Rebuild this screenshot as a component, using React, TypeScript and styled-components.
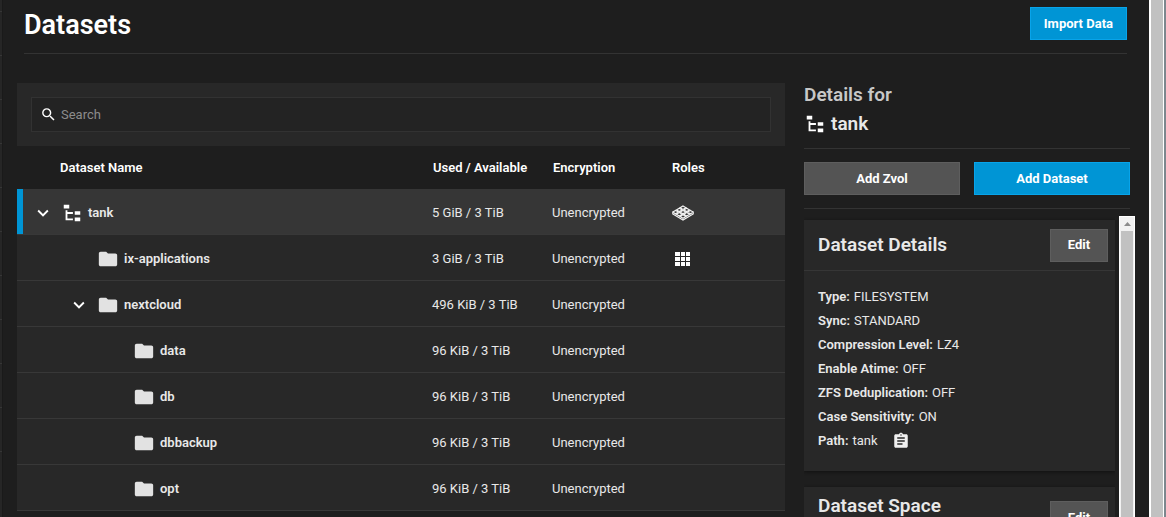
import React from "react";
import styled, { createGlobalStyle } from "styled-components";
import { MdAssignment, MdExpandMore, MdFolder, MdSearch } from "react-icons/md";

const GlobalStyle = createGlobalStyle`
  *, *::before, *::after { box-sizing: border-box; }
  body {
    margin: 0;
    background: #1e1e1e;
    color: #e8e8e8;
    font-family: Roboto, "Liberation Sans", sans-serif;
    font-size: 13px;
    line-height: 20px;
  }
  h1, h2, h3, dl, dd { margin: 0; }
`;

const Shell = styled.div`
  display: flex;
  height: 100vh;
  overflow: hidden;
`;

const NavEdge = styled.div`
  flex: 0 0 3px;
  background: repeating-linear-gradient(#262626 0 43px, #363636 43px 44px) 0 -32px;
  border-right: 1px solid #1a1a1a;
`;

const Page = styled.main`
  flex: 1;
  min-width: 0;
  display: flex;
  flex-direction: column;
  padding: 0 14px;
`;

const PageHeader = styled.header`
  display: flex;
  align-items: center;
  justify-content: space-between;
  height: 54px;
  margin: 0 8px 0 7px;
  padding-bottom: 6px;
  border-bottom: 1px solid #333;
`;

const PageTitle = styled.h1`
  padding-top: 2px;
  font-size: 27px;
  line-height: 32px;
  font-weight: 600;
  color: #fff;
`;

const Button = styled.button<{ $primary?: boolean }>`
  height: 33px;
  min-width: 58px;
  padding: 0 13px;
  border: 1px solid ${(p) => (p.$primary ? "#08a4ea" : "#5e5e5e")};
  background: ${(p) => (p.$primary ? "#0095d5" : "#545454")};
  color: #fff;
  font: 700 13px/20px Roboto, "Liberation Sans", sans-serif;
`;

const Columns = styled.div`
  flex: 1;
  min-height: 0;
  display: flex;
  gap: 19px;
  padding-top: 29px;
`;

const TreePanel = styled.section`
  flex: 1;
  min-width: 0;
`;

const SearchBar = styled.div`
  padding: 14px;
  background: #282828;
`;

const SearchBox = styled.label`
  display: flex;
  align-items: center;
  gap: 4px;
  height: 35px;
  padding: 0 8px;
  border: 1px solid #323232;
  background: #232323;
  color: #fff;
`;

const SearchInput = styled.input`
  flex: 1;
  min-width: 0;
  padding: 0;
  border: 0;
  outline: 0;
  background: transparent;
  color: #fff;
  font: 13px/20px Roboto, "Liberation Sans", sans-serif;
  &::placeholder { color: #8c8c8c; opacity: 1; }
`;

const Table = styled.table`
  width: 100%;
  table-layout: fixed;
  border-collapse: separate;
  border-spacing: 0;
`;

const HeadCell = styled.th<{ $width?: number; $indent?: number }>`
  width: ${(p) => (p.$width ? `${p.$width}px` : "auto")};
  height: 43px;
  padding: 0 0 0 ${(p) => p.$indent ?? 0}px;
  text-align: left;
  font-weight: 600;
  color: #fff;
`;

const Row = styled.tr<{ $selected?: boolean }>`
  background: ${(p) => (p.$selected ? "#363636" : "#282828")};
  td { border-bottom: 1px solid #383838; }
  td:first-child { box-shadow: ${(p) => (p.$selected ? "inset 6px 0 #0095d5" : "none")}; }
`;

const Cell = styled.td`
  height: 46px;
  padding: 2px 0 0;
  svg { display: block; }
`;

const NameCell = styled.div<{ $level: number }>`
  display: flex;
  align-items: center;
  padding-left: ${(p) => 15 + p.$level * 36}px;
  font-weight: 600;
`;

const Toggle = styled.button`
  display: flex;
  width: 22px;
  height: 22px;
  padding: 0;
  border: 0;
  background: transparent;
  color: #fff;
`;

const ToggleSpace = styled.span`
  width: 22px;
`;

const TypeIcon = styled.span`
  display: flex;
  margin: 0 5px 0 7px;
  color: #e2e2e2;
`;

const DetailsPanel = styled.aside`
  flex: 0 0 331px;
  display: flex;
  flex-direction: column;
  min-height: 0;
`;

const DetailsHeader = styled.header`
  margin-right: 5px;
  padding-bottom: 10px;
  border-bottom: 1px solid #333;
`;

const DetailsTitle = styled.h2`
  font-size: 19px;
  line-height: 29px;
  font-weight: 600;
  color: #c8c8c8;
  margin-top: -3px;
`;

const DetailsName = styled.div`
  display: flex;
  align-items: center;
  gap: 5px;
  font-size: 19px;
  line-height: 29px;
  font-weight: 600;
`;

const Actions = styled.div`
  display: grid;
  grid-template-columns: 1fr 1fr;
  gap: 14px;
  margin-right: 5px;
  padding: 13px 0;
  border-bottom: 1px solid #333;
`;

const ScrollArea = styled.div`
  flex: 1;
  min-height: 0;
  display: flex;
  gap: 4px;
  padding-top: 7px;
`;

const Cards = styled.div`
  flex: 1;
  padding-top: 4px;
  display: flex;
  flex-direction: column;
  gap: 16px;
  overflow: hidden;
`;

const Card = styled.section`
  flex: none;
  background: #282828;
  box-shadow: 0 1px 3px #111;
`;

const CardHeader = styled.header<{ $top?: boolean }>`
  display: flex;
  align-items: ${(p) => (p.$top ? "flex-start" : "center")};
  justify-content: space-between;
  height: ${(p) => (p.$top ? 62 : 51)}px;
  padding: ${(p) => (p.$top ? 14 : 0)}px 7px 0 14px;
  border-bottom: 1px solid #363636;
`;

const CardTitle = styled.h3`
  font-size: 19px;
  line-height: 10px;
  font-weight: 600;
`;

const Facts = styled.dl`
  padding: 14px 14px 18px;
`;

const Fact = styled.div`
  display: flex;
  align-items: center;
  gap: 4px;
  height: 24px;
  line-height: 24px;
  dt { font-weight: 600; }
`;

const CopyButton = styled.button`
  display: flex;
  margin-left: 10px;
  padding: 0;
  border: 0;
  background: transparent;
  color: #f0f0f0;
`;

const InnerScrollbar = styled.div`
  flex: 0 0 16px;
  display: flex;
  flex-direction: column;
  align-items: center;
  border: 1px solid #fff;
  border-bottom: 0;
  background: #f1f1f1;
`;

const ScrollUp = styled.div`
  flex: 0 0 14px;
  display: flex;
  align-items: center;
`;

const ScrollThumb = styled.div`
  flex: 1;
  width: 12px;
  background: #c1c1c1;
`;

const WindowScrollbar = styled.div`
  flex: 0 0 17px;
  border-left: 2px solid #fff;
  border-right: 2px solid #7d878e;
  background: #c1c1c1;
  box-shadow: inset -1px 0 #fff;
`;

const TreeIcon = () => (
  <svg width="22" height="22" viewBox="0 0 24 24" fill="#fff" aria-hidden="true">
    <path d="M3 3h6v4H3zM15 10h6v4h-6zM15 17h6v4h-6zM13 13H7v5h6v2H5V9h2v2h6z" />
  </svg>
);

const PoolIcon = () => (
  <svg width="22" height="16" viewBox="0 0 22 16" fill="none" stroke="#f4f4f4" strokeWidth="1.2" aria-label="System dataset">
    {[0, 1, 2].flatMap((i) =>
      [0, 1, 2].map((j) => (
        <path key={`${i}-${j}`} d={`M${11 + (i - j) * 3.7} ${1 + (i + j) * 2.2}l2.900 1.700-2.900 1.700-2.900-1.700z`} />
      ))
    )}
    <path d="M.8 7.800v1.200L11 15l10.200-6V7.800" />
  </svg>
);

const AppsIcon = () => (
  <svg width="22" height="16" viewBox="0 0 22 16" fill="#fff" aria-label="Applications">
    {[1, 6, 11].flatMap((y) =>
      [3, 9, 14].map((x) => <rect key={`${x}-${y}`} x={x} y={y} width={x === 3 ? 5 : 4} height="4" />)
    )}
  </svg>
);

type Dataset = { name: string; level: number; used: string; open?: boolean; root?: boolean; role?: "pool" | "apps" };

const datasets: Dataset[] = [
  { name: "tank", level: 0, used: "5 GiB / 3 TiB", open: true, root: true, role: "pool" },
  { name: "ix-applications", level: 1, used: "3 GiB / 3 TiB", role: "apps" },
  { name: "nextcloud", level: 1, used: "496 KiB / 3 TiB", open: true },
  { name: "data", level: 2, used: "96 KiB / 3 TiB" },
  { name: "db", level: 2, used: "96 KiB / 3 TiB" },
  { name: "dbbackup", level: 2, used: "96 KiB / 3 TiB" },
  { name: "opt", level: 2, used: "96 KiB / 3 TiB" },
];

const facts = [
  ["Type:", "FILESYSTEM"],
  ["Sync:", "STANDARD"],
  ["Compression Level:", "LZ4"],
  ["Enable Atime:", "OFF"],
  ["ZFS Deduplication:", "OFF"],
  ["Case Sensitivity:", "ON"],
  ["Path:", "tank"],
];

export default function App() {
  return (
    <Shell>
      <GlobalStyle />
      <NavEdge />
      <Page>
        <PageHeader>
          <PageTitle>Datasets</PageTitle>
          <Button $primary>Import Data</Button>
        </PageHeader>
        <Columns>
          <TreePanel>
            <SearchBar>
              <SearchBox>
                <MdSearch size={17} aria-hidden="true" />
                <SearchInput type="text" placeholder="Search" aria-label="Search" />
              </SearchBox>
            </SearchBar>
            <Table>
              <thead>
                <tr>
                  <HeadCell $indent={43}>Dataset Name</HeadCell>
                  <HeadCell $width={120} $indent={1}>Used / Available</HeadCell>
                  <HeadCell $width={120} $indent={1}>Encryption</HeadCell>
                  <HeadCell $width={113}>Roles</HeadCell>
                </tr>
              </thead>
              <tbody>
                {datasets.map((d) => (
                  <Row key={d.name} $selected={d.root}>
                    <Cell>
                      <NameCell $level={d.level}>
                        {d.open ? (
                          <Toggle aria-label={`Collapse ${d.name}`}>
                            <MdExpandMore size={22} />
                          </Toggle>
                        ) : (
                          <ToggleSpace />
                        )}
                        <TypeIcon>{d.root ? <TreeIcon /> : <MdFolder size={22} />}</TypeIcon>
                        {d.name}
                      </NameCell>
                    </Cell>
                    <Cell>{d.used}</Cell>
                    <Cell>Unencrypted</Cell>
                    <Cell>
                      {d.role === "pool" && <PoolIcon />}
                      {d.role === "apps" && <AppsIcon />}
                    </Cell>
                  </Row>
                ))}
              </tbody>
            </Table>
          </TreePanel>
          <DetailsPanel>
            <DetailsHeader>
              <DetailsTitle>Details for</DetailsTitle>
              <DetailsName>
                <TreeIcon />
                tank
              </DetailsName>
            </DetailsHeader>
            <Actions>
              <Button>Add Zvol</Button>
              <Button $primary>Add Dataset</Button>
            </Actions>
            <ScrollArea>
              <Cards>
                <Card>
                  <CardHeader>
                    <CardTitle>Dataset Details</CardTitle>
                    <Button>Edit</Button>
                  </CardHeader>
                  <Facts>
                    {facts.map(([label, value]) => (
                      <Fact key={label}>
                        <dt>{label}</dt>
                        <dd>{value}</dd>
                        {label === "Path:" && (
                          <CopyButton aria-label="Copy path">
                            <MdAssignment size={18} />
                          </CopyButton>
                        )}
                      </Fact>
                    ))}
                  </Facts>
                </Card>
                <Card>
                  <CardHeader $top>
                    <CardTitle>Dataset Space</CardTitle>
                    <Button>Edit</Button>
                  </CardHeader>
                </Card>
              </Cards>
              <InnerScrollbar aria-hidden="true">
                <ScrollUp>
                  <svg width="7" height="4" viewBox="0 0 7 4" fill="#8b8b8b">
                    <path d="M3.500 0 7 4H0z" />
                  </svg>
                </ScrollUp>
                <ScrollThumb />
              </InnerScrollbar>
            </ScrollArea>
          </DetailsPanel>
        </Columns>
      </Page>
      <WindowScrollbar aria-hidden="true" />
    </Shell>
  );
}
